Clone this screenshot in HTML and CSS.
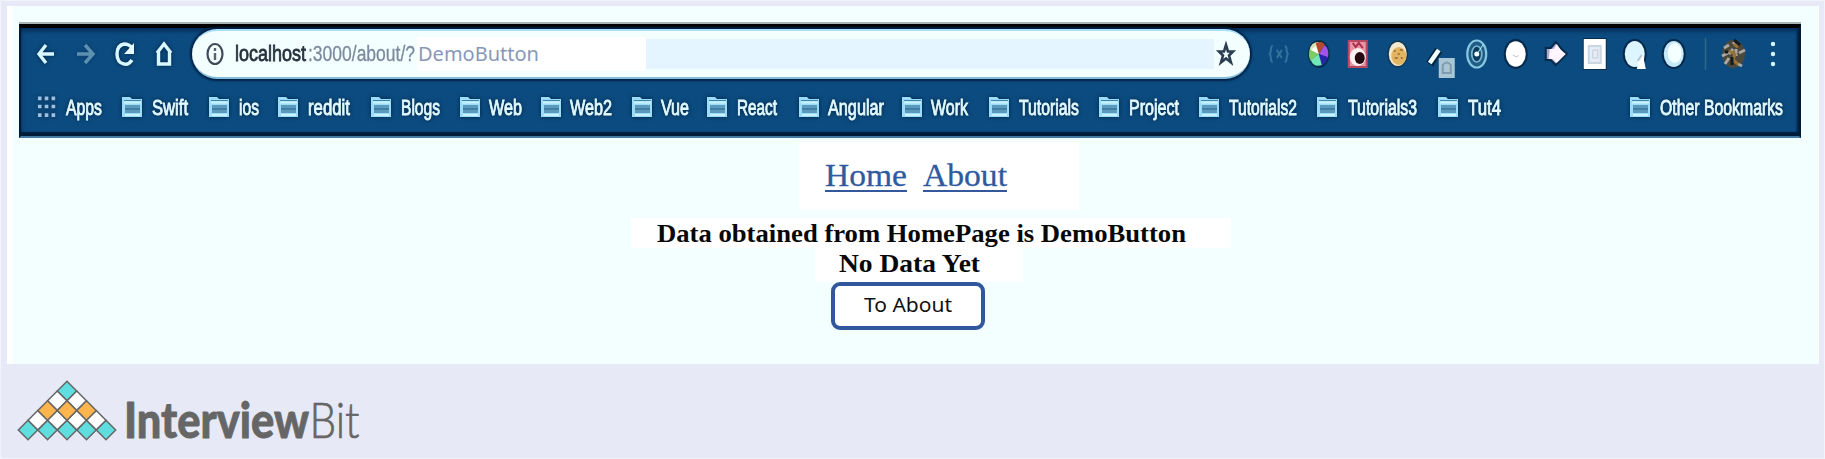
FILE: index.html
```html
<!DOCTYPE html>
<html lang="en">
<head>
<meta charset="utf-8">
<title>InterviewBit</title>
<link rel="stylesheet" href="styles.css">
</head>
<body>
<svg width="0" height="0" class="defs" aria-hidden="true">
  <defs>
    <symbol id="folder" viewBox="0 0 22 24">
      <path d="M1 2h8l2 2h10v18H1z" fill="#9bdcf8"/>
      <path d="M3 7.500h17M4 20h15" stroke="#c8f3ff" stroke-width="2"/>
      <path d="M4 10h15v8H4z" fill="#5c9abd"/>
      <path d="M4 14h15" stroke="#437fa5" stroke-width="2"/>
      <path d="M3 5.500h17" stroke="#4584aa" stroke-width="1"/>
    </symbol>
    <symbol id="tile" viewBox="-11 -11 22 22">
      <path d="M0-9.700 9.700 0 0 9.700-9.700 0z" stroke="#666" stroke-width="1.500"/>
    </symbol>
  </defs>
</svg>
<main class="panel">
  <section class="browser">
    <div class="toolbar">
      <div class="controls">
        <svg width="39" height="40" viewBox="0 0 39 40"><path d="M28 20H13M20 11l-7 9 7 9" class="line"/></svg>
        <svg width="39" height="40" viewBox="0 0 39 40" class="dim"><path d="M12 20h15M20 11l8 9-8 9" class="line"/></svg>
        <svg width="39" height="40" viewBox="0 0 39 40"><path d="M28 26c-2 3-5 5-8 4-5-1-7-5-7-10s2-9 7-10c3 0 6 1 8 4" class="line"/><path d="M30 9v11h-10z" fill="#e5fbff"/></svg>
        <svg width="39" height="40" viewBox="0 0 39 40"><path d="M14 19l7-9 7 9M15.500 18v12h11V18" class="line"/></svg>
      </div>
      <div class="address">
        <svg class="info" width="20" height="26" viewBox="0 0 20 26"><ellipse cx="10" cy="13" rx="7.500" ry="10" fill="none" stroke="#3f4b58" stroke-width="2.200"/><path d="M10 12v7M10 7v3" stroke="#59626d" stroke-width="2.400"/></svg>
        <svg class="host" width="182" height="34" viewBox="0 0 182 34"><text x="0" y="24" textLength="71" lengthAdjust="spacingAndGlyphs" class="host-name">localhost</text><text x="73" y="24" textLength="107" lengthAdjust="spacingAndGlyphs" class="host-path">:3000/about/?</text></svg>
        <div class="query"><svg width="126" height="34" viewBox="0 0 126 34"><text x="1" y="24" textLength="121" lengthAdjust="spacingAndGlyphs">DemoButton</text></svg></div>
        <div class="rest"></div>
        <svg class="star" width="22" height="28" viewBox="0 0 22 28"><path d="M11 5l2 6.500h5l-4 4 2 7-5-4-5 4 2-7-4-4h5z" fill="none" stroke="#2c3e52" stroke-width="2.600"/></svg>
      </div>
      <div class="extensions">
        <svg viewBox="-19.750 -25 39.500 50"><path d="M-6-8c-3 0-1 6-3 8 2 2 0 8 3 8M6-8c3 0 1 6 3 8-2 2 0 8-3 8M-2-4l5 8M3-4l-5 8" class="faint"/></svg>
        <svg viewBox="-19.750 -25 39.500 50"><ellipse rx="11" ry="14" fill="#06304f"/><path d="M0 0V-12Q-8-12-9-4z" fill="#d8e0b0"/><path d="M0 0l-3-11Q4-14 6-9z" fill="#b4492d"/><path d="M0 0L6-9Q11-4 9 4z" fill="#a253e8"/><path d="M0 0l9 3Q7 11 2 12z" fill="#2824a8"/><path d="M0 0l3 11Q-5 14-8 6z" fill="#72e8b7"/><path d="M0 0l-8 7Q-11 2-9-5z" fill="#7dcc65"/><path d="M0 0l-3-8-5 4z" fill="#fff"/></svg>
        <svg viewBox="-19.750 -25 39.500 50"><path d="M-10-14H10V14H-10z" fill="#b8475f"/><path d="M-8-12H8V12H-8z" fill="#e693a2"/><ellipse cx="0" cy="3" rx="8" ry="9" fill="#fff0f0"/><ellipse cx="2" cy="4" rx="5" ry="6" fill="#240812"/><path d="M-5-11l3 4 3-4 4 5" stroke="#a92f4d" stroke-width="2" fill="none"/></svg>
        <svg viewBox="-19.750 -25 39.500 50"><ellipse rx="10.500" ry="13.500" fill="#123953"/><ellipse rx="9" ry="12" fill="#f3e9cf"/><ellipse cx="1" cy="2" rx="7.500" ry="9" fill="#e2b562"/><path d="M-4-3h2M2-4h3M-3 4h3M3 4h2M0 0h2" stroke="#a97a3b" stroke-width="2"/></svg>
        <svg viewBox="-19.750 -25 39.500 50"><path d="M-7 10L2-4" stroke="#05233c" stroke-width="8"/><path d="M-7 9L2-4" stroke="#f2ffff" stroke-width="4.500"/><path d="M2 4h16v20H2z" fill="#a9c6d7"/><path d="M6 11q4-5 8 0v8H6z" fill="none" stroke="#809bad" stroke-width="2"/></svg>
        <svg viewBox="-19.750 -25 39.500 50"><ellipse rx="9.500" ry="13.500" fill="#215d83" stroke="#86c7e2" stroke-width="2.200"/><ellipse rx="5" ry="8" fill="#0b3b5d" stroke="#79b8d5" stroke-width="1.700"/><circle r="2.500" fill="#f7ffff"/><path d="M1-1l5-8" stroke="#bdeeff"/></svg>
        <svg viewBox="-19.750 -25 39.500 50"><ellipse rx="12" ry="15" fill="#04294a"/><ellipse rx="10" ry="12.700" fill="#fff"/><path d="M-3 1l4 2 2-2" stroke="#b9c4cc" fill="none"/></svg>
        <svg viewBox="-19.750 -25 39.500 50"><path d="M-10-6h5l5-6 5 6 6 6-6 6-5 5-5-5h-5z" fill="#a9a9cf" stroke="#04294a" stroke-width="2"/><path d="M-6-5h4l3-5 4 6 5 4-5 5-4 4-4-4h-4z" fill="#fff5ff"/></svg>
        <svg viewBox="-19.750 -25 39.500 50"><path d="M-12-16h24v32h-24z" fill="#06304f"/><path d="M-11-15h22v30h-22z" fill="#fff"/><path d="M-6-8H6V9H-6z" fill="#e5ecf5" stroke="#c9d7e3" stroke-width="2"/><path d="M-2-4h5v8h-5z" fill="none" stroke="#c5ccd9"/></svg>
        <svg viewBox="-19.750 -25 39.500 50"><ellipse rx="12" ry="15" fill="#04294a"/><ellipse rx="10" ry="13" fill="#dcf5ff"/><path d="M2 15l2-9 4-6 3 15z" fill="#fff"/><path d="M3 7l4-6" stroke="#b5c5d0" stroke-width="2"/></svg>
        <svg viewBox="-19.750 -25 39.500 50"><ellipse rx="12" ry="15" fill="#04294a"/><ellipse rx="10" ry="13" fill="#c3e9fa"/><ellipse cx="1" cy="-1" rx="7" ry="10" fill="#f4ffff"/></svg>
        <svg class="profile" viewBox="0 0 100 50"><path d="M11.500 9v32" stroke="#2f688e" stroke-width="1.500"/><ellipse cx="39.500" cy="25" rx="11.500" ry="14" fill="#4b493c"/><path d="M30 19l5-3M39 13l5 4M28 27l6-3M45 24l6-3M31 35l4-6M44 35l4 2M35 25l4-5M42 20v7" stroke="#aaa7a5" stroke-width="3"/><path d="M35 22l6 3-2 6 5 4M44 18l-4-3" stroke="#9b7434" stroke-width="3" fill="none"/><path d="M40 11l6 5M38 28v8M31 23h3" stroke="#131b20" stroke-width="3"/><circle cx="79" cy="15" r="2.200" class="dot"/><circle cx="79" cy="25" r="2.200" class="dot"/><circle cx="79" cy="35" r="2.200" class="dot"/></svg>
      </div>
    </div>
    <nav class="bookmarks">
      <div class="mark"><svg class="grid" viewBox="0 0 22 24"><path d="M1 2.500h20M1 11.500h20M1 21h20" stroke="#9cc0df" stroke-width="4" stroke-dasharray="4 3.500"/></svg><svg class="label" width="36"><text x="0" y="22" textLength="36" lengthAdjust="spacingAndGlyphs">Apps</text></svg></div>
      <div class="mark"><svg class="icon"><use href="#folder"/></svg><svg class="label" width="37"><text x="0" y="22" textLength="36" lengthAdjust="spacingAndGlyphs">Swift</text></svg></div>
      <div class="mark"><svg class="icon"><use href="#folder"/></svg><svg class="label" width="19"><text x="0" y="22" textLength="20" lengthAdjust="spacingAndGlyphs">ios</text></svg></div>
      <div class="mark"><svg class="icon"><use href="#folder"/></svg><svg class="label" width="43"><text x="0" y="22" textLength="42" lengthAdjust="spacingAndGlyphs">reddit</text></svg></div>
      <div class="mark"><svg class="icon"><use href="#folder"/></svg><svg class="label" width="39"><text x="0" y="22" textLength="39" lengthAdjust="spacingAndGlyphs">Blogs</text></svg></div>
      <div class="mark"><svg class="icon"><use href="#folder"/></svg><svg class="label" width="31"><text x="-1" y="22" textLength="33" lengthAdjust="spacingAndGlyphs">Web</text></svg></div>
      <div class="mark"><svg class="icon"><use href="#folder"/></svg><svg class="label" width="41"><text x="-1" y="22" textLength="42" lengthAdjust="spacingAndGlyphs">Web2</text></svg></div>
      <div class="mark"><svg class="icon"><use href="#folder"/></svg><svg class="label" width="25"><text x="-1" y="22" textLength="28" lengthAdjust="spacingAndGlyphs">Vue</text></svg></div>
      <div class="mark"><svg class="icon"><use href="#folder"/></svg><svg class="label" width="42"><text x="0" y="22" textLength="40" lengthAdjust="spacingAndGlyphs">React</text></svg></div>
      <div class="mark"><svg class="icon"><use href="#folder"/></svg><svg class="label" width="53"><text x="-1" y="22" textLength="56" lengthAdjust="spacingAndGlyphs">Angular</text></svg></div>
      <div class="mark"><svg class="icon"><use href="#folder"/></svg><svg class="label" width="37"><text x="-1" y="22" textLength="37" lengthAdjust="spacingAndGlyphs">Work</text></svg></div>
      <div class="mark"><svg class="icon"><use href="#folder"/></svg><svg class="label" width="60"><text x="0" y="22" textLength="60" lengthAdjust="spacingAndGlyphs">Tutorials</text></svg></div>
      <div class="mark"><svg class="icon"><use href="#folder"/></svg><svg class="label" width="50"><text x="0" y="22" textLength="50" lengthAdjust="spacingAndGlyphs">Project</text></svg></div>
      <div class="mark"><svg class="icon"><use href="#folder"/></svg><svg class="label" width="68"><text x="0" y="22" textLength="68" lengthAdjust="spacingAndGlyphs">Tutorials2</text></svg></div>
      <div class="mark"><svg class="icon"><use href="#folder"/></svg><svg class="label" width="71"><text x="1" y="22" textLength="69" lengthAdjust="spacingAndGlyphs">Tutorials3</text></svg></div>
      <div class="mark"><svg class="icon"><use href="#folder"/></svg><svg class="label" width="34"><text x="0" y="22" textLength="33" lengthAdjust="spacingAndGlyphs">Tut4</text></svg></div>
      <div class="mark other"><svg class="icon"><use href="#folder"/></svg><svg class="label" width="124"><text x="0" y="22" textLength="123" lengthAdjust="spacingAndGlyphs">Other Bookmarks</text></svg></div>
    </nav>
  </section>
  <section class="page">
    <nav class="links"><a><svg width="82" height="44"><text x="0" y="36" textLength="82" lengthAdjust="spacingAndGlyphs">Home</text></svg></a><a><svg width="84" height="44"><text x="0" y="36" textLength="84" lengthAdjust="spacingAndGlyphs">About</text></svg></a></nav>
    <div class="message"><svg width="530" height="30"><text x="0" y="24" textLength="529" lengthAdjust="spacingAndGlyphs">Data obtained from HomePage is DemoButton</text></svg></div>
    <div class="empty"><svg width="142" height="30"><text x="0" y="24" textLength="141" lengthAdjust="spacingAndGlyphs">No Data Yet</text></svg></div>
    <button class="action"><svg width="88" height="30"><text x="0" y="18.500" textLength="88" lengthAdjust="spacingAndGlyphs">To About</text></svg></button>
  </section>
</main>
<footer class="footer">
  <svg width="360" height="70" viewBox="0 375 360 70">
    <g fill="#60dddf"><use href="#tile" x="56" y="380" width="22" height="22"/><use href="#tile" x="17" y="419" width="22" height="22"/><use href="#tile" x="36.500" y="419" width="22" height="22"/><use href="#tile" x="56" y="419" width="22" height="22"/><use href="#tile" x="75.500" y="419" width="22" height="22"/><use href="#tile" x="95" y="419" width="22" height="22"/></g>
    <g fill="#fff"><use href="#tile" x="46.250" y="389.700" width="22" height="22"/><use href="#tile" x="65.750" y="389.700" width="22" height="22"/><use href="#tile" x="26.750" y="409.200" width="22" height="22"/><use href="#tile" x="46.250" y="409.200" width="22" height="22"/><use href="#tile" x="65.750" y="409.200" width="22" height="22"/><use href="#tile" x="85.250" y="409.200" width="22" height="22"/></g>
    <g fill="#ffb54d"><use href="#tile" x="36.500" y="399.500" width="22" height="22"/><use href="#tile" x="56" y="399.500" width="22" height="22"/><use href="#tile" x="75.500" y="399.500" width="22" height="22"/></g>
    <text x="124" y="438" textLength="185" lengthAdjust="spacingAndGlyphs" class="brand-bold">Interview</text>
    <text x="309.500" y="438" textLength="50" lengthAdjust="spacingAndGlyphs" class="brand-light">Bit</text>
  </svg>
</footer>
</body>
</html>
```

FILE: styles.css
```css
* { box-sizing: border-box; }
body { margin: 0; width: 1825px; height: 459px; overflow: hidden; background: #e7eaf6; border: 1px solid #f2f4fb; font-family: "Liberation Sans", Arial, sans-serif; }
svg { display: block; flex: none; overflow: visible; }
.defs { position: absolute; }
.panel { width: 1812px; height: 358px; margin: 5px 0 0 6px; padding: 18px 11px 0 6px; background: #f3ffff; border-left: 6px solid #fff; border-right: 1px solid #fff; }
.browser { width: 1782px; height: 114px; background: #0c4b7f; border: 2px solid #001b38; border-top: 4px solid #000; border-bottom: 2px solid #427aa4; box-shadow: inset 0 -4px 1px #001c3b, inset 0 3px 4px #002d58, 0 -2px #a9b3b3, inset -2px 0 2px #001c3b; }
.toolbar { display: flex; height: 51px; padding-top: 1px; }
.controls { display: flex; width: 171px; padding: 5px 0 0 5px; }
.line { fill: none; stroke: #d8f7ff; stroke-width: 3.4; }
.controls svg { filter: blur(.4px) drop-shadow(0 0 2px #002344); }
.controls .dim { opacity: .4; }
.address { display: flex; align-items: center; width: 1058px; height: 50px; padding: 0 13px; border-radius: 25px; background: #f3ffff; border-top: 2px solid #a9ddfa; border-bottom: 2px solid #83bddd; box-shadow: 0 0 2px 2px #002144; }
.host { margin: 0 0 0 10px; }
.host, .info, .star, .extensions svg { filter: blur(.45px); }
.host text { font-size: 22.5px; }
.host-name { fill: #26323d; stroke: #26323d; stroke-width: .8; }
.host-path { fill: #7c899d; stroke: #7c899d; stroke-width: .3; }
.query { width: 230px; height: 34px; background: #fff; }
.query text { font: 20px "Noto Sans", sans-serif; fill: #8797ba; }
.rest { width: 570px; height: 30px; background: #e4f5ff; }
.star { margin-left: 1px; }
.extensions { display: flex; padding-left: 9px; }
.extensions svg { width: 39.5px; height: 50px; }
.extensions .profile { width: 100px; }
.faint { fill: none; stroke: #32729c; stroke-width: 2; }
.dot { fill: #d5f5ff; }
.bookmarks { display: flex; gap: 19px; height: 32px; margin-top: 14px; padding: 0 15px 0 16px; }
.mark { display: flex; gap: 9px; }
.icon, .grid { width: 22px; height: 24px; margin-top: 2px; }
.grid { width: 20px; }
.label { height: 30px; }
.label text { font-size: 21.5px; fill: #e1faff; stroke: #e1faff; stroke-width: .9; }
.mark { filter: blur(.45px) drop-shadow(0 0 2px #002344); }
.other { margin-left: auto; }
.page { display: flex; flex-direction: column; align-items: center; margin-left: 0; padding: 4px 0 0 64px; }
.links { display: flex; gap: 16px; width: 280px; height: 68px; padding: 8px 0 0 26px; background: #fff; margin-right: 12px; }
.links a { height: 42px; border-bottom: 2px solid #34589b; }
.links text { font: 32.5px "Liberation Serif", serif; fill: #3159a0; stroke: #3159a0; stroke-width: .3; }
.message, .empty { background: #fff; }
.message { width: 600px; height: 30px; margin-top: 8px; padding-left: 26px; margin-right: 28px; }
.empty { width: 208px; height: 34px; padding-left: 24px; margin-right: 52px; }
.message text, .empty text { font: bold 25px "Liberation Serif", serif; fill: #080808; }
.action { width: 154px; height: 48px; margin: 0 74px 0 0; padding: 4px 0 0 29px; border: 4px solid #31589c; border-radius: 9px; background: #fff; }
.action text { font: 20.5px "Noto Sans", sans-serif; fill: #111; }
.footer { padding-top: 11px; margin-left: -1px; }
.brand-bold { font: 900 49px Lato, sans-serif; fill: #666; stroke: #666; stroke-width: .8; stroke-linejoin: round; }
.brand-light { font: 300 50px Lato, sans-serif; fill: #666; stroke: #666; stroke-width: .7; }
```
